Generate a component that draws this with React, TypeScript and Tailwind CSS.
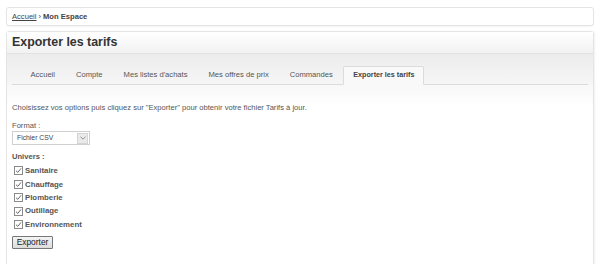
import React from "react";

const tabs = ["Accueil", "Compte", "Mes listes d'achats", "Mes offres de prix", "Commandes", "Exporter les tarifs"];
const univers = ["Sanitaire", "Chauffage", "Plomberie", "Outillage", "Environnement"];

function Check() {
  return (
    <span className="inline-flex items-center justify-center w-[9px] h-[9px] border border-[#8a8a8a] bg-white mr-[2px]">
      <svg width="7" height="7" viewBox="0 0 7 7">
        <path d="M1 3.7 L2.8 5.4 L6 1.4" fill="none" stroke="#555" strokeWidth="0.9" />
      </svg>
    </span>
  );
}

export default function App() {
  return (
    <div className="w-[600px] h-[264px] overflow-hidden bg-white px-[6px] pt-[7px] text-[7.6px] text-[#555]" style={{ fontFamily: '"Liberation Sans", Arial, sans-serif' }}>
      <div className="h-[19px] border border-[#e4e4e4] rounded-[3px] bg-white flex items-center px-[5px] text-[#444] text-[7.6px] shadow-[0_1px_1px_rgba(0,0,0,0.04)]">
        <span className="underline">Accueil</span>
        <span className="mx-[2px]">›</span>
        <span className="font-bold">Mon Espace</span>
      </div>
      <div className="mt-[5px] border border-[#e4e4e4] rounded-t-[3px] h-[240px] shadow-[1px_0_2px_rgba(0,0,0,0.06)]">
        <div className="h-[22px] bg-gradient-to-b from-white to-[#f2f2f2] flex items-center px-[5px] border-b border-[#e2e2e2]">
          <span className="text-[12.4px] font-bold text-[#333] leading-none">Exporter les tarifs</span>
        </div>
        <div className="h-[31px] bg-gradient-to-b from-[#ececec] to-[#f6f6f6] px-[5px] flex items-end">
          <div className="flex-1 flex border-b border-[#dcdcdc] pl-[8px] h-[18px] items-end">
            {tabs.map((t, i) =>
              i === tabs.length - 1 ? (
                <div key={t} className="h-[19px] -mb-px px-[9px] flex items-center bg-[#f9f9f9] border border-[#dcdcdc] border-b-[#f9f9f9] rounded-t-[2px] font-bold text-[#444] text-[7.2px]">
                  {t}
                </div>
              ) : (
                <div key={t} className="h-[18px] px-[10.5px] flex items-center text-[#555] text-[7.6px]">
                  {t}
                </div>
              )
            )}
          </div>
        </div>
        <div className="bg-gradient-to-b from-[#f8f8f8] to-white to-[22px] px-[5px] pt-[18px]">
          <div className="leading-[10px] text-[#555]">Choisissez vos options puis cliquez sur "Exporter" pour obtenir votre fichier Tarifs à jour.</div>
          <div className="mt-[8px] leading-[10px] text-[#555]">Format :</div>
          <div className="w-[78px] h-[14px] border border-[#d0d0d0] bg-white flex items-center justify-between pl-[4px] text-[6.8px] text-[#444]">
            <span>Fichier CSV</span>
            <span className="w-[11px] h-[11px] mr-px bg-[#eaeaea] border border-[#d4d4d4] flex items-center justify-center">
              <svg width="6" height="4" viewBox="0 0 6 4"><path d="M0.5 0.8 L3 3.2 L5.5 0.8" fill="none" stroke="#888" strokeWidth="0.9" /></svg>
            </span>
          </div>
          <div className="mt-[7px] leading-[10px] text-[#555] font-bold">Univers :</div>
          <div className="mt-[2.3px] flex flex-col pl-[2px]">
            {univers.map((u) => (
              <div key={u} className="h-[13.4px] flex items-center text-[7.8px] font-bold text-[#555]">
                <Check />
                {u}
              </div>
            ))}
          </div>
          <button className="mt-[4.7px] h-[13px] w-[41px] border border-[#777] bg-gradient-to-b from-[#f4f4f4] to-[#dcdcdc] text-[8.4px] text-[#222] leading-none rounded-[1px]">
            Exporter
          </button>
        </div>
      </div>
    </div>
  );
}
